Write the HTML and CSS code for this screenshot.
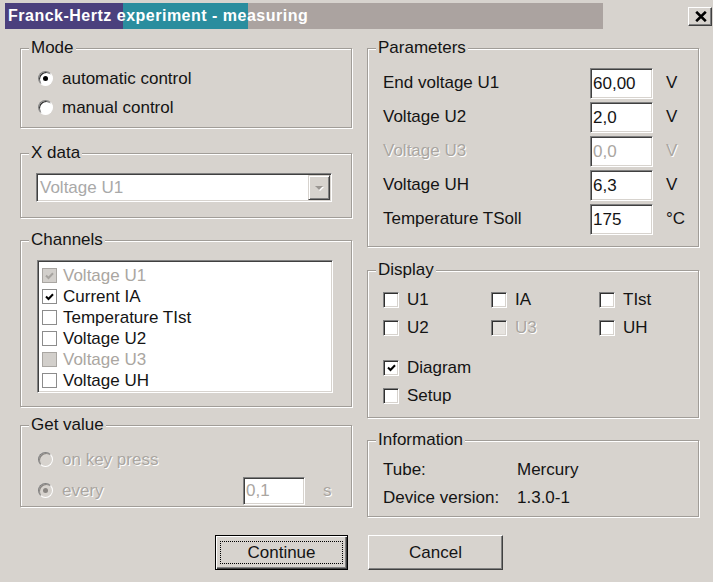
FILE: index.html
```html
<!DOCTYPE html>
<html>
<head>
<meta charset="utf-8">
<title>Franck-Hertz experiment - measuring</title>
<link rel="stylesheet" href="styles.css">
</head>
<body>
<div class="dialog">
  <div class="titlerow">
    <div class="titlebar">Franck-Hertz experiment - measuring</div>
    <button class="close" aria-label="Close">
      <svg width="12" height="11" viewBox="0 0 12 11"><path d="M1.2 0.8 L10.8 10.2 M10.8 0.8 L1.2 10.2" stroke="#000" stroke-width="2.6" fill="none"/></svg>
    </button>
  </div>

  <div class="content">
    <div class="col">
      <fieldset class="group g-mode">
        <legend>Mode</legend>
        <div class="radio-row"><span class="radio checked"></span><span>automatic control</span></div>
        <div class="radio-row"><span class="radio"></span><span>manual control</span></div>
      </fieldset>

      <fieldset class="group g-xdata">
        <legend>X data</legend>
        <div class="combo">
          <span class="combo-text">Voltage U1</span>
          <span class="combo-btn"><span class="arrow"></span></span>
        </div>
      </fieldset>

      <fieldset class="group g-channels">
        <legend>Channels</legend>
        <div class="listbox">
          <div class="list-row disabled"><span class="flatbox gray"><svg class="tick" viewBox="0 0 9 8"><path d="M1 3.5 L3.5 6 L8 1.2" stroke="currentColor" stroke-width="2" fill="none"/></svg></span><span>Voltage U1</span></div>
          <div class="list-row"><span class="flatbox"><svg class="tick" viewBox="0 0 9 8"><path d="M1 3.5 L3.5 6 L8 1.2" stroke="currentColor" stroke-width="2" fill="none"/></svg></span><span>Current IA</span></div>
          <div class="list-row"><span class="flatbox"></span><span>Temperature TIst</span></div>
          <div class="list-row"><span class="flatbox"></span><span>Voltage U2</span></div>
          <div class="list-row disabled"><span class="flatbox gray"></span><span>Voltage U3</span></div>
          <div class="list-row"><span class="flatbox"></span><span>Voltage UH</span></div>
        </div>
      </fieldset>

      <fieldset class="group g-get">
        <legend>Get value</legend>
        <div class="radio-row disabled"><span class="radio off"></span><span>on key press</span></div>
        <div class="radio-row disabled every-row">
          <span class="every-label"><span class="radio off checked"></span><span>every</span></span>
          <span class="field small dis">0,1</span>
          <span class="unit-s">s</span>
        </div>
      </fieldset>
    </div>

    <div class="col">
      <fieldset class="group g-params">
        <legend>Parameters</legend>
        <div class="param-row"><span class="p-label">End voltage U1</span><span class="field">60,00</span><span class="unit">V</span></div>
        <div class="param-row"><span class="p-label">Voltage U2</span><span class="field">2,0</span><span class="unit">V</span></div>
        <div class="param-row disabled"><span class="p-label">Voltage U3</span><span class="field dis">0,0</span><span class="unit">V</span></div>
        <div class="param-row"><span class="p-label">Voltage UH</span><span class="field">6,3</span><span class="unit">V</span></div>
        <div class="param-row"><span class="p-label">Temperature TSoll</span><span class="field">175</span><span class="unit">°C</span></div>
      </fieldset>

      <fieldset class="group g-display">
        <legend>Display</legend>
        <div class="disp-grid">
          <div class="chk"><span class="box3d"></span><span>U1</span></div>
          <div class="chk"><span class="box3d"></span><span>IA</span></div>
          <div class="chk"><span class="box3d"></span><span>TIst</span></div>
          <div class="chk"><span class="box3d"></span><span>U2</span></div>
          <div class="chk disabled"><span class="box3d off"></span><span>U3</span></div>
          <div class="chk"><span class="box3d"></span><span>UH</span></div>
        </div>
        <div class="disp-extra">
          <div class="chk"><span class="box3d"><svg class="tick" viewBox="0 0 9 8"><path d="M1 3.5 L3.5 6 L8 1.2" stroke="currentColor" stroke-width="2" fill="none"/></svg></span><span>Diagram</span></div>
          <div class="chk"><span class="box3d"></span><span>Setup</span></div>
        </div>
      </fieldset>

      <fieldset class="group g-info">
        <legend>Information</legend>
        <div class="info-row"><span class="i-label">Tube:</span><span>Mercury</span></div>
        <div class="info-row"><span class="i-label">Device version:</span><span>1.3.0-1</span></div>
      </fieldset>
    </div>
  </div>

  <div class="buttons">
    <button class="btn default"><span class="focus">Continue</span></button>
    <button class="btn cancel"><span class="plain">Cancel</span></button>
  </div>
</div>
</body>
</html>
```

FILE: styles.css
```css
* { box-sizing: border-box; }
html, body { margin: 0; padding: 0; }
body {
  background: #d7d3ce;
  font-family: "Liberation Sans", Arial, sans-serif;
  font-size: 17px;
  color: #141414;
  width: 713px;
  height: 582px;
  overflow: hidden;
}

/* title */
.titlerow {
  display: flex;
  align-items: flex-start;
  height: 29px;
  padding: 3px 1px 0 5px;
}
.titlebar {
  width: 598px;
  height: 26px;
  background: linear-gradient(to right, #4b407d 0 118px, #2a8d9e 118px 243px, #aba3a0 243px);
  color: #fff;
  font-weight: bold;
  font-size: 16px;
  letter-spacing: 0.5px;
  line-height: 26px;
  padding-left: 3px;
  white-space: nowrap;
}
.close {
  margin-left: auto;
  margin-top: 4px;
  width: 24px;
  height: 19px;
  padding: 0;
  background: #d7d3ce;
  border: 1px solid;
  border-color: #fff #404040 #404040 #fff;
  box-shadow: inset -1px -1px 0 #808080;
  display: flex;
  align-items: center;
  justify-content: center;
}
.close svg { display: block; margin-left: 1px; }

/* layout */
.content {
  display: flex;
  gap: 15px;
  padding: 9px 0 0 20px;
}
.col {
  width: 332px;
  display: flex;
  flex-direction: column;
}

.group {
  --pl: 15px;
  margin: 0;
  min-width: 0;
  border: 1px solid #a19d98;
  box-shadow: inset 1px 1px 0 #fff, 1px 1px 0 #fff;
  padding: 0 0 0 var(--pl);
}
.group legend {
  margin-left: calc(8px - var(--pl));
  padding: 0 2px;
  line-height: 20px;
  background: #d7d3ce;
}

.g-mode { --pl: 17px; padding-top: 6px; padding-bottom: 5px; }
.g-xdata { margin-top: 15px; padding-top: 10px; padding-bottom: 15px; }
.g-channels { --pl: 16px; margin-top: 12px; padding-top: 10px; padding-bottom: 13px; }
.g-get { --pl: 17px; margin-top: 8px; padding-top: 9px; }

.g-params { padding-top: 8px; padding-bottom: 10px; }
.g-display { margin-top: 13px; padding-top: 6px; padding-bottom: 7px; }
.g-info { margin-top: 12px; padding-top: 6px; padding-bottom: 4px; }

.disabled { color: #aaa6a1; text-shadow: 1px 1px 0 #fff; }

/* radios */
.radio-row {
  display: flex;
  align-items: center;
  height: 29px;
}
.g-get .radio-row { height: 31px; }
.radio {
  position: relative;
  flex: none;
  width: 15px;
  height: 15px;
  margin-right: 9px;
  border-radius: 50%;
  background: #fff;
  border: 1px solid;
  border-color: #808080 #fff #fff #808080;
  box-shadow: inset 1px 1px 0 #303030;
}
.radio.checked::after {
  content: "";
  position: absolute;
  left: 4px;
  top: 4px;
  width: 5px;
  height: 5px;
  border-radius: 50%;
  background: #000;
}
.radio.off { background: #d7d3ce; box-shadow: inset 1px 1px 0 #8a8682; }
.radio.off.checked::after { background: #8a8682; }

.every-label {
  display: flex;
  align-items: center;
  width: 205px;
  flex: none;
}
.unit-s { margin-left: 18px; }

/* combo */
.combo {
  display: flex;
  width: 296px;
  height: 29px;
  background: #fff;
  border: 1px solid;
  border-color: #808080 #fff #fff #808080;
  box-shadow: inset 1px 1px 0 #404040, inset -1px -1px 0 #d7d3ce;
  padding: 1px;
}
.combo-text {
  flex: 1;
  color: #a9a9a9;
  line-height: 25px;
  padding-left: 2px;
}
.combo-btn {
  width: 22px;
  height: 25px;
  background: #d7d3ce;
  border: 1px solid;
  border-color: #d7d3ce #404040 #404040 #d7d3ce;
  box-shadow: inset 1px 1px 0 #fff, inset -1px -1px 0 #808080;
  display: flex;
  align-items: center;
  justify-content: center;
}
.arrow {
  width: 0;
  height: 0;
  border-left: 4px solid transparent;
  border-right: 4px solid transparent;
  border-top: 4px solid #9a9692;
  filter: drop-shadow(1px 1px 0 #fff);
}

/* list box */
.listbox {
  width: 296px;
  background: #fff;
  border: 1px solid;
  border-color: #808080 #fff #fff #808080;
  box-shadow: inset 1px 1px 0 #404040, inset -1px -1px 0 #d7d3ce;
  padding: 4px 0 1px 4px;
}
.list-row {
  display: flex;
  align-items: center;
  height: 21px;
}
.flatbox {
  flex: none;
  width: 15px;
  height: 15px;
  margin-right: 6px;
  border: 1px solid #8c8c8c;
  background: #fff;
  color: #000;
  display: flex;
  align-items: center;
  justify-content: center;
  text-shadow: none;
}
.flatbox.gray { background: #d2cfcb; color: #a6a39f; border-color: #a9a6a2; }
.tick { width: 9px; height: 8px; display: block; }

/* fields */
.field {
  flex: none;
  width: 63px;
  height: 31px;
  background: #fff;
  border: 1px solid;
  border-color: #808080 #fff #fff #808080;
  box-shadow: inset 1px 1px 0 #404040, inset -1px -1px 0 #d7d3ce;
  line-height: 29px;
  padding-left: 2px;
  color: #141414;
  text-shadow: none;
}
.field.dis { color: #aaa6a1; }
.field.small { width: 62px; height: 28px; line-height: 26px; }

.param-row {
  display: flex;
  align-items: center;
  height: 34px;
}
.p-label { width: 207px; flex: none; }
.unit { margin-left: 13px; }

/* display */
.disp-grid {
  display: grid;
  grid-template-columns: 108px 108px 108px;
  grid-auto-rows: 28px;
}
.disp-extra { margin-top: 12px; }
.disp-extra .chk { height: 28px; }
.chk {
  display: flex;
  align-items: center;
}
.box3d {
  flex: none;
  width: 16px;
  height: 16px;
  margin-right: 8px;
  background: #fff;
  border: 1px solid;
  border-color: #808080 #fff #fff #808080;
  box-shadow: inset 1px 1px 0 #303030, inset -1px -1px 0 #d7d3ce;
  color: #000;
  display: flex;
  align-items: center;
  justify-content: center;
  text-shadow: none;
}
.box3d.off { background: #e6e3df; }

/* info */
.info-row {
  display: flex;
  align-items: center;
  height: 28px;
}
.i-label { width: 134px; flex: none; }

/* buttons */
.buttons {
  display: flex;
  gap: 20px;
  margin-top: 18px;
  padding-left: 215px;
}
.btn {
  font: inherit;
  color: #141414;
  height: 35px;
  padding: 0;
  background: #d7d3ce;
  border: 1px solid;
  border-color: #fff #404040 #404040 #fff;
  box-shadow: inset -1px -1px 0 #808080;
  display: flex;
  align-items: stretch;
}
.btn.default {
  width: 133px;
  border-color: #000;
  box-shadow: inset 1px 1px 0 #fff, inset -1px -1px 0 #404040, inset -2px -2px 0 #808080;
}
.btn.cancel { width: 135px; }
.focus {
  flex: 1;
  margin: 5px 4px 5px 4px;
  border: 1px dotted #000;
  display: flex;
  align-items: center;
  justify-content: center;
}
.plain {
  flex: 1;
  display: flex;
  align-items: center;
  justify-content: center;
}
```
